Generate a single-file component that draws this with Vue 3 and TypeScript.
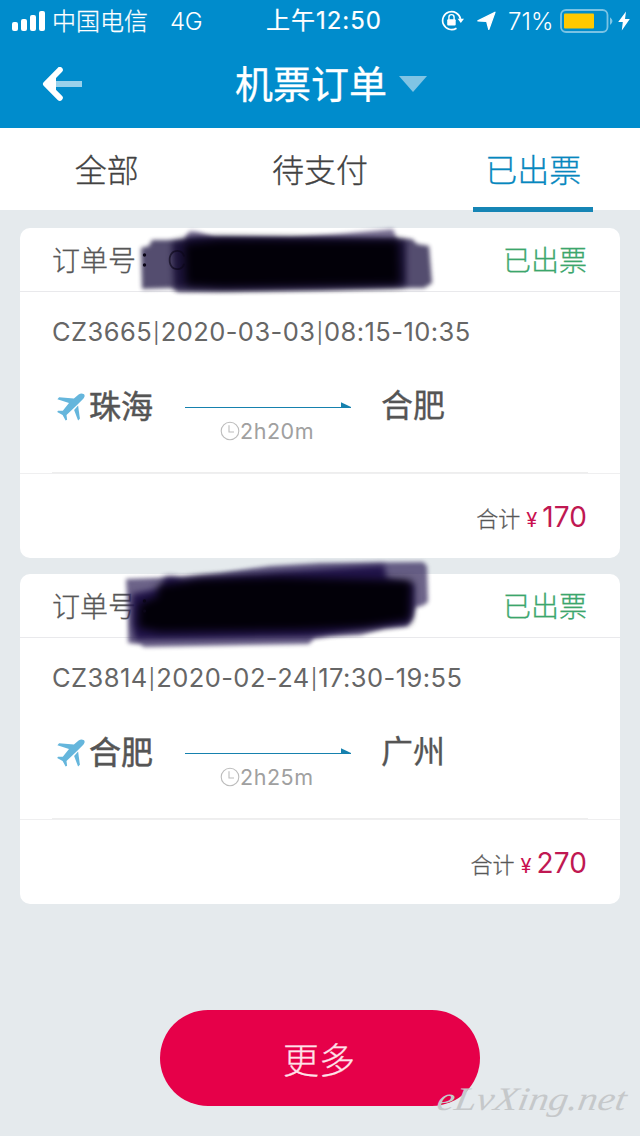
<script setup lang="ts">
interface Stroke { d: string; color: string; opacity: number; edge: 'crisp' | 'soft' | 'wide' }
interface Order {
  id: number
  flight: string[]
  from: string
  to: string
  duration: string
  price: string
  initial: string
  strokes: Stroke[]
}

const tabs: { name: string; active: boolean }[] = [
  { name: '全部', active: false },
  { name: '待支付', active: false },
  { name: '已出票', active: true },
]

const orders: Order[] = [
  {
    id: 1,
    flight: ['CZ3665', '2020-03-03', '08:15-10:35'],
    from: '珠海',
    to: '合肥',
    duration: '2h20m',
    price: '170',
    initial: 'C',
    strokes: [
      { d: 'M165 9 L170 3 L178 4 L196 10 L270 10 L320 6 L373 1 L377 12 L376 30 L172 30 Z', color: '#3a2c60', opacity: 0.66, edge: 'crisp' },
      { d: 'M121 20 L129 18 L132 12 L160 12 L180 10 L392 11 L397 16 L409 18 L412 55 L404 60 L380 60 L300 62 L158 64 L152 60 L122 61 Z', color: '#2f2750', opacity: 0.82, edge: 'crisp' },
      { d: 'M152 14 L172 9 L386 12 L386 58 L210 61 L154 60 Z', color: '#130a30', opacity: 0.85, edge: 'soft' },
      { d: 'M165 16 L200 12 L378 13 L380 56 L200 59 L166 57 Z', color: '#020008', opacity: 1, edge: 'wide' },
    ],
  },
  {
    id: 2,
    flight: ['CZ3814', '2020-02-24', '17:30-19:55'],
    from: '合肥',
    to: '广州',
    duration: '2h25m',
    price: '270',
    initial: '',
    strokes: [
      { d: 'M106 5 L160 3 L200 -1 L250 -8 L300 -11 L403 -12 L407 -8 L408 28 L402 32 L395 33 L393 44 L387 52 L365 54 L340 61 L310 62 L294 64 L289 70 L124 73 L120 70 L108 69 L108 45 Z', color: '#392d60', opacity: 0.74, edge: 'crisp' },
      { d: 'M112 20 L141 14 L145 3 L153 3 L163 6 L260 -2 L364 -9 L367 5 L394 10 L394 32 L389 50 L350 54 L290 63 L115 66 L112 50 Z', color: '#1a0c44', opacity: 0.9, edge: 'soft' },
      { d: 'M138 12 L180 5 L260 3 L391 7 L390 46 L345 53 L280 56 L140 58 L118 54 L119 30 L138 22 Z', color: '#020008', opacity: 1, edge: 'wide' },
    ],
  },
]
</script>

<template>
  <div class="screen">
    <header class="top">
      <div class="status">
        <div class="carrier">
          <svg class="signal" width="34" height="20" viewBox="0 0 34 20"><g fill="#fff"><rect y="11" width="6" height="9" rx="2"/><rect x="9" y="8" width="6" height="12" rx="2"/><rect x="18" y="4" width="6" height="16" rx="2"/><rect x="27" width="6" height="20" rx="2"/></g></svg>
          <span class="operator">中国电信</span><span class="network">4G</span>
        </div>
        <div class="time">上午12:50</div>
        <div class="indicators">
          <svg width="24" height="22" viewBox="0 0 24 22" fill="none" stroke="#fff" stroke-width="1.7"><path d="M15.5 18.2A9 9 0 1 1 19.5 9"/><path d="M16.6 8.8h6.4l-3.2 4.1z" fill="#fff" stroke="none"/><path d="M7.9 10V7.2a2.6 2.6 0 0 1 5.2 0V10" stroke-width="1.4"/><rect x="6.2" y="9.2" width="8.5" height="6.3" rx="1" fill="#fff" stroke="none"/></svg>
          <svg class="locate" width="19" height="20" viewBox="0 0 19 20"><path d="M18 1.2 11.8 18.5l-2.1-8L.8 9.9z" fill="#fff" stroke="#fff" stroke-width="1.2" stroke-linejoin="round"/></svg>
          <span class="percent">71%</span>
          <svg width="54" height="24" viewBox="0 0 54 24"><rect x="1" y="1" width="46.5" height="22" rx="5" fill="none" stroke="#fff" stroke-opacity=".48" stroke-width="1.8"/><path d="M50 8.2q5 3.8 0 7.7z" fill="#fff" opacity=".5"/><rect x="4" y="4.5" width="30" height="15" rx="1" fill="#ffc900"/></svg>
          <svg class="bolt" width="12" height="20" viewBox="0 0 12 20"><path d="M8 .5.2 11h4.6L3.8 19.5 11.8 8H7z" fill="#fff"/></svg>
        </div>
      </div>
      <div class="navbar">
        <svg class="back" width="41" height="34" viewBox="0 0 41 34"><path d="M12 14h28v6H12z" fill="#fff" opacity=".6"/><path d="M17.8 3 4 17l13.8 13.8" fill="none" stroke="#fff" stroke-width="6" stroke-linecap="round" stroke-linejoin="round"/><path d="m7 17 7-7v14z" fill="#fff"/></svg>
        <h1>机票订单</h1>
        <svg class="caret" width="28" height="16" viewBox="0 0 28 16"><path d="M0 0h28L14 16z" fill="#80c4e4"/></svg>
      </div>
    </header>

    <nav class="tabs">
      <div v-for="tab in tabs" :key="tab.name" class="tab" :class="{ active: tab.active }"><span>{{ tab.name }}</span></div>
    </nav>

    <main class="orders">
      <article v-for="order in orders" :key="order.id" class="card">
        <div class="card-head">
          <span class="number">订单号</span>
          <span class="issued">已出票</span>
        </div>
        <div class="details">
          <div class="flight"><template v-for="(part, i) in order.flight" :key="i"><span v-if="i > 0" class="bar">|</span>{{ part }}</template></div>
          <div class="route">
            <svg class="plane" width="28" height="29" viewBox="0 0 28 29"><path d="M26.5.9c2 .9 1 3.7-.7 5.3l-6 6L9.5 22l.6 4.8-1.5.6-3-5.5L.2 19.1l.8-1.4 4.8.1 6.2-7.7L.4 6.3l1.7-2.1 14.8 1.3L21.6 1.6Q24-.2 26.5.9Z" fill="#65b6dc"/><path d="m21.1 12.5 1.8 13.3-1.8 1.8-4-10.5z" fill="#65b6dc"/></svg>
            <span class="city from">{{ order.from }}</span>
            <div class="journey">
              <svg width="167" height="8" viewBox="0 0 167 8"><rect y="6" width="165" height="1" fill="#1681ae"/><path d="M156 1.3 166 6v1h-10z" fill="#1681ae"/></svg>
              <div class="duration"><svg width="20" height="20" viewBox="0 0 20 20" fill="none" stroke="#bcbcbc" stroke-width="1.1"><circle cx="10" cy="10" r="8.8"/><path d="M9 4.2V11h5"/></svg><span>{{ order.duration }}</span></div>
            </div>
            <span class="city to">{{ order.to }}</span>
          </div>
        </div>
        <div class="total"><span class="sum">合计</span><span class="yen">¥</span><span class="price">{{ order.price }}</span></div>
        <svg class="scribble" width="430" height="100" viewBox="0 -16 430 100">
          <path v-for="(stroke, i) in order.strokes" :key="i" :class="stroke.edge" :d="stroke.d" :fill="stroke.color" :opacity="stroke.opacity"/>
          <g class="trace"><circle cx="124.5" cy="27" r="1.7"/><circle cx="124.5" cy="37" r="1.7"/><text x="147" y="42">{{ order.initial }}</text></g>
        </svg>
      </article>
    </main>
    <button class="more">更多</button>
    <svg class="watermark" width="204" height="56" viewBox="0 0 204 56"><text x="2" y="30" textLength="189" lengthAdjust="spacingAndGlyphs" transform="skewX(-10) translate(5 0)">eLvXing.net</text></svg>
  </div>
</template>

<style>
html, body { margin: 0; background: #e5eaed; }
</style>

<style scoped>
.screen { position: relative; width: 640px; height: 1136px; overflow: hidden; background: #e5eaed; color: #575757; font-family: Inter, "Noto Sans CJK SC", sans-serif; }
.screen svg { display: block; flex: none; }
.top { height: 128px; background: #008ccc; color: #fff; }
.status { height: 40px; display: grid; grid-template-columns: 256px 136px 248px; }
.carrier { display: flex; align-items: center; padding-left: 12px; font-size: 24px; line-height: 40px; }
.operator { margin: 2px 0 0 6px; font-weight: 300; -webkit-text-stroke: .25px #fff; }
.network { margin: 1px 0 0 22px; font-weight: 300; letter-spacing: -0.3px; }
.time { padding-top: 1px; height: 39px; text-align: center; font-size: 24px; line-height: 40px; font-weight: 400; letter-spacing: 1px; white-space: nowrap; -webkit-text-stroke: .2px #fff; }
.indicators { display: flex; align-items: center; padding-left: 49px; }
.locate { margin-left: 12px; }
.percent { width: 47px; margin: 1px 5px 0 12px; font-size: 24px; line-height: 40px; font-weight: 300; letter-spacing: 0; white-space: nowrap; }
.bolt { margin-left: 4px; }
.navbar { height: 88px; display: flex; align-items: center; padding-left: 42px; }
.navbar h1 { margin: 0 0 0 152px; font-size: 38px; line-height: 88px; font-weight: 400; white-space: nowrap; -webkit-text-stroke: .3px #fff; }
.caret { margin-left: 12px; }
.tabs { height: 82px; background: #fff; display: grid; grid-template-columns: repeat(3, 1fr); }
.tab { display: flex; justify-content: center; height: 84px; font-size: 32px; line-height: 86px; font-weight: 300; color: #424242; -webkit-text-stroke: .3px; }
.tab span { width: 120px; height: 84px; box-sizing: border-box; text-align: center; }
.tab.active { color: #0687be; }
.tab.active span { border-bottom: 5px solid #1685b5; }
.orders { padding: 18px 20px 0; display: grid; gap: 16px; }
.card { position: relative; height: 330px; border-radius: 10px; background: #fff; }
.card-head { height: 63px; padding: 0 33px 0 32px; display: flex; justify-content: space-between; border-bottom: 1px solid #e9e9ec; font-size: 28px; line-height: 67px; font-weight: 300; -webkit-text-stroke: .3px; }
.issued { color: #3ba66c; }
.details { height: 181px; box-sizing: border-box; padding: 0 32px; }
.flight { height: 80px; line-height: 80px; font-size: 25.5px; font-weight: 400; letter-spacing: .43px; color: #666; white-space: nowrap; font-feature-settings: "calt" 0; }
.bar { display: inline-block; width: 8.6px; font-size: 20px; line-height: 20px; font-weight: 400; text-align: center; letter-spacing: 0; vertical-align: 1px; }
.route { height: 100px; display: flex; align-items: flex-start; border-bottom: 1px solid #eee; }
.plane { margin: 21px 0 0 5px; }
.city { font-size: 32px; line-height: 40px; font-weight: 400; color: #555; white-space: nowrap; }
.from { width: 65px; margin: 15px 0 0 4px; -webkit-text-stroke: .5px #555; }
.journey { width: 167px; margin: 29px 0 0 31px; }
.duration { display: flex; align-items: center; height: 24px; margin: 10px 0 0 35px; font-size: 21.5px; letter-spacing: .55px; color: #a0a0a0; }
.to { margin: 14px 0 0 29px; -webkit-text-stroke: .3px #555; }
.total { display: flex; justify-content: flex-end; align-items: baseline; height: 84px; border-top: 1px solid #efeff0; padding-right: 33px; line-height: 86px; white-space: nowrap; }
.sum { font-size: 22px; font-weight: 300; -webkit-text-stroke: .3px; }
.yen { margin-left: 6px; color: #c9104f; font-size: 20px; }
.price { margin-left: 5px; color: #c01852; font-size: 28px; letter-spacing: .1px; }
.scribble { position: absolute; left: 0; top: -16px; pointer-events: none; }
.crisp { filter: blur(2px); }
.soft { filter: blur(3px); }
.wide { filter: blur(4px); }
.trace { fill: #0b0618; font-size: 27px; font-weight: 300; }
.trace text { opacity: .65; }
.more { display: block; width: 320px; height: 96px; margin: 106px auto 0; border: 0; border-radius: 48px; padding: 0 2px 0 0; background: #e60049; color: #ffe2e9; font: 300 36px/94px "Noto Sans CJK SC", sans-serif; -webkit-text-stroke: .3px; }
.watermark { position: absolute; left: 434px; top: 1080px; overflow: visible; }
.watermark text { font: italic 33px "Liberation Serif", serif; fill: #c5c8ca; }
</style>
